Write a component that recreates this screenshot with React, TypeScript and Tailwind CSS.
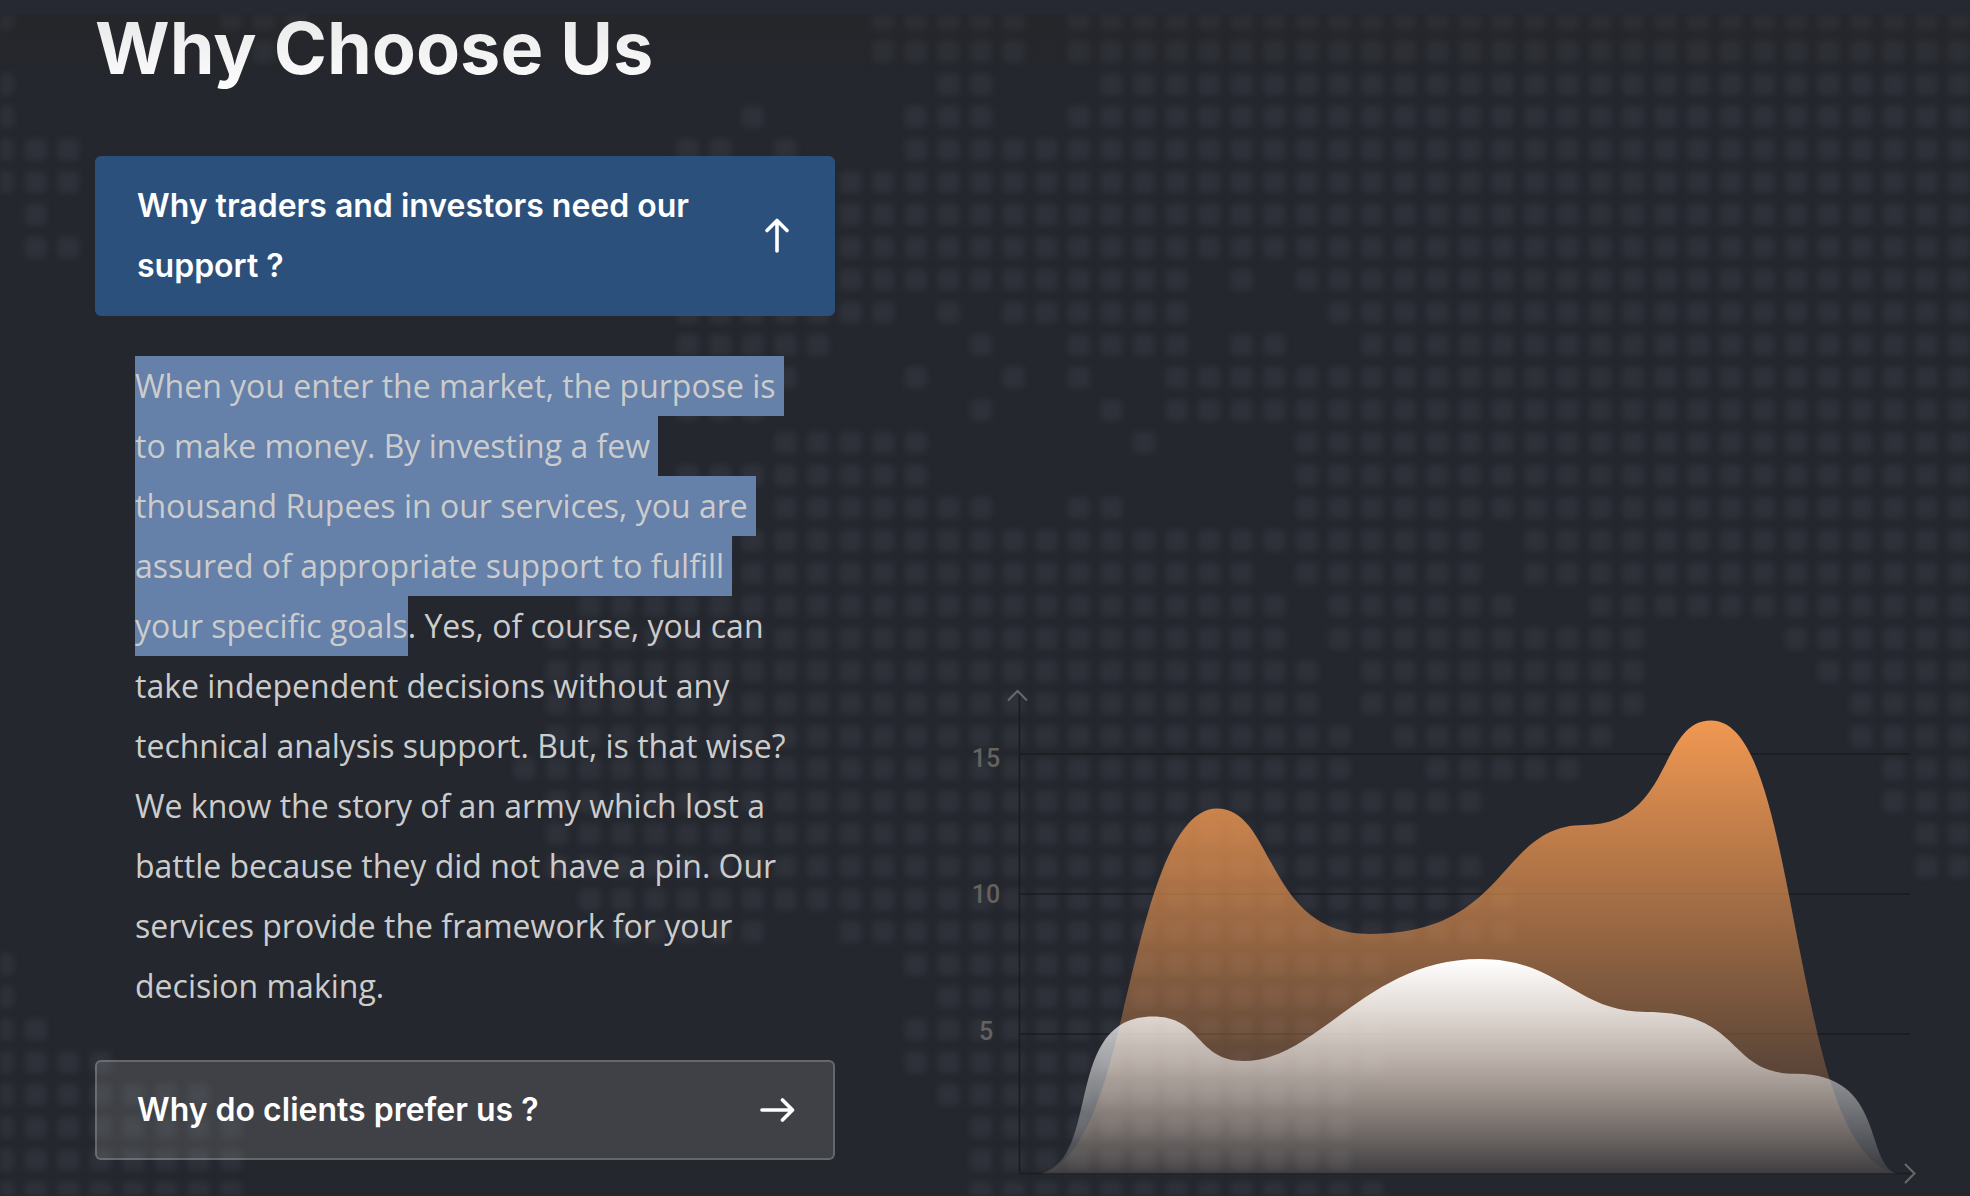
import { useState } from "react";
import type { ReactNode } from "react";

type Range = [number, number];

const PITCH = 32.6;

// World map made of dots: for each row, the filled column ranges.
const MAP_ROWS: Range[][] = [
  [[0, 0], [7, 9], [27, 31], [33, 60]],
  [[8, 8], [27, 31], [33, 60]],
  [[0, 0], [29, 30], [34, 60]],
  [[0, 0], [23, 23], [28, 30], [33, 60]],
  [[0, 2], [21, 22], [24, 24], [28, 60]],
  [[0, 2], [26, 60]],
  [[1, 1], [26, 60]],
  [[1, 2], [26, 60]],
  [[26, 36], [38, 38], [40, 60]],
  [[21, 27], [29, 29], [31, 36], [41, 60]],
  [[21, 25], [30, 30], [33, 36], [38, 39], [42, 60]],
  [[20, 24], [28, 28], [31, 31], [33, 33], [36, 60]],
  [[21, 23], [30, 30], [34, 34], [36, 60]],
  [[24, 28], [35, 35], [40, 60]],
  [[21, 28], [40, 60]],
  [[24, 30], [33, 34], [40, 60]],
  [[20, 39], [40, 45], [47, 60]],
  [[20, 38], [40, 45], [47, 60]],
  [[18, 39], [41, 46], [49, 60]],
  [[17, 39], [41, 50], [55, 60]],
  [[17, 40], [42, 50], [56, 60]],
  [[17, 40], [42, 50], [57, 60]],
  [[17, 41], [43, 49], [57, 60]],
  [[16, 41], [44, 48], [58, 60]],
  [[17, 45], [58, 60]],
  [[17, 43], [59, 60]],
  [[17, 45], [59, 60]],
  [[18, 46]],
  [[19, 23], [26, 46]],
  [[0, 0], [28, 42]],
  [[0, 0], [29, 42]],
  [[0, 1], [28, 42]],
  [[0, 3], [28, 42]],
  [[0, 6], [29, 41]],
  [[0, 7], [30, 41]],
  [[0, 7], [30, 41]],
  [[0, 7], [30, 42]],
];

const ORANGE_AREA =
  "M71 493.5C112 482 132 420 152 336C174 245 198 128.4 247 128.4" +
  "C305 128.4 295 254 400 254C540 254 528 145 614 145" +
  "C703 145 688 40.5 741 40.5C800 40.5 812 205 848 356" +
  "C866 432 890 486 927 493.5Z";

const WHITE_AREA =
  "M71 493.5C132 478 92 336.5 183 336.5C232 336.5 226 381 274 381" +
  "C348 381 396 279 510 279C590 279 605 332 676 332" +
  "C775 332 755 393.7 826 393.7C916 393.7 894 484 927 493.5Z";

function MapBackground() {
  const dots: ReactNode[] = [];
  MAP_ROWS.forEach((ranges, row) => {
    ranges.forEach(([from, to]) => {
      for (let col = from; col <= to; col++) {
        dots.push(
          <rect
            key={`${row}-${col}`}
            x={3 + col * PITCH - 11}
            y={5 + row * PITCH - 11}
            width={22}
            height={22}
            rx={5}
          />,
        );
      }
    });
  });

  return (
    <div className="absolute inset-0 overflow-hidden" aria-hidden="true">
      <svg
        className="w-full blur-[3px]"
        viewBox="0 0 1970 1182"
        fill="#2e3139"
      >
        {dots}
      </svg>
      <div className="absolute inset-x-0 top-0 h-20 bg-linear-to-b from-[#26241f]/25 to-transparent" />
    </div>
  );
}

function Arrow({ up }: { up: boolean }) {
  return (
    <svg
      className={`w-8 h-8 shrink-0 ${up ? "-rotate-90" : ""}`}
      viewBox="0 0 32 32"
      fill="none"
      stroke="currentColor"
      strokeWidth={3.6}
      strokeLinecap="round"
      strokeLinejoin="round"
      overflow="visible"
      aria-hidden="true"
    >
      <path d="M1 16H31M21.5 6L31.5 16L21.5 26" />
    </svg>
  );
}

function AccordionItem({ title, open, onToggle, children }: {
  title: string;
  open: boolean;
  onToggle: () => void;
  children?: ReactNode;
}) {
  return (
    <div>
      <button
        type="button"
        aria-expanded={open}
        onClick={onToggle}
        className={`w-full flex items-center justify-between gap-10 px-10 py-[18px] rounded-md border-2 text-left text-white text-[32px] leading-[60px] font-semibold ${
          open ? "bg-[#2c507c] border-[#2c507c]" : "bg-[#d0cdc8]/16 border-white/20"
        }`}
      >
        <span>{title}</span>
        <Arrow up={open} />
      </button>
      {open && children && (
        <p className="px-10 pt-10 pb-11 font-['Open_Sans',sans-serif] text-[32px] leading-[60px] text-[#ccc]">
          {children}
        </p>
      )}
    </div>
  );
}

function Highlight({ children }: { children: ReactNode }) {
  return (
    <mark className="bg-[#6580a9] text-inherit pt-2 pb-[9px] box-decoration-clone whitespace-break-spaces">
      {children}
    </mark>
  );
}

function Chart() {
  return (
    <svg
      className="w-full h-auto"
      viewBox="0 0 950 516"
      role="img"
      aria-label="Growth chart"
    >
      <defs>
        <linearGradient id="orange" x1="0" y1="0" x2="0" y2="1">
          <stop offset="0" stopColor="#f19852" />
          <stop offset="1" stopColor="#f19852" stopOpacity="0.05" />
        </linearGradient>
        <linearGradient id="white" x1="0" y1="0" x2="0" y2="1">
          <stop offset="0" stopColor="#fff" />
          <stop offset="1" stopColor="#fff" stopOpacity="0.08" />
        </linearGradient>
      </defs>
      <path
        d="M49.5 12V493.5M49.5 74H940M49.5 214H940M49.5 354H940M49.5 493.5H943"
        stroke="#1b1c1f"
        strokeWidth={1.6}
        fill="none"
      />
      <path d={ORANGE_AREA} fill="url(#orange)" />
      <path d={WHITE_AREA} fill="url(#white)" />
      <path
        d="M38 20.5L47.5 11L57 20.5M935 484L944.5 493.5L935 503"
        stroke="#69696b"
        strokeWidth={2}
        fill="none"
      />
      <g
        className="font-[Roboto,sans-serif] font-medium"
        fontSize={25}
        textAnchor="middle"
        fill="#64625f"
      >
        <text x={16} y={87}>15</text>
        <text x={16} y={223}>10</text>
        <text x={16} y={360}>5</text>
      </g>
    </svg>
  );
}

export default function App() {
  const [open, setOpen] = useState(0);

  const toggle = (index: number) => setOpen(open === index ? -1 : index);

  return (
    <div className="min-h-screen bg-[#24272e] font-[Inter,sans-serif]">
      <div className="h-3.5 bg-[#262932]" />
      <section className="relative">
        <MapBackground />
        <div className="relative grid grid-cols-[740fr_950fr] items-end gap-[135px] pl-[95px] pr-[50px]">
          <div className="pb-9">
            <h1 className="mb-[58px] pb-4 text-[72px] leading-[68px] font-bold text-transparent bg-clip-text bg-linear-to-b from-[#e9e9e9] to-white">
              Why Choose Us
            </h1>
            <AccordionItem
              title="Why traders and investors need our support ?"
              open={open === 0}
              onToggle={() => toggle(0)}
            >
              <Highlight>
                When you enter the market, the purpose is to make money. By
                investing a few thousand Rupees in our services, you are assured
                of appropriate support to fulfill your specific goals
              </Highlight>
              . Yes, of course, you can take independent decisions without any
              technical analysis support. But, is that wise? We know the story
              of an army which lost a battle because they did not have a pin.
              Our services provide the framework for your decision making.
            </AccordionItem>
            <AccordionItem
              title="Why do clients prefer us ?"
              open={open === 1}
              onToggle={() => toggle(1)}
            />
          </div>
          <Chart />
        </div>
      </section>
    </div>
  );
}
